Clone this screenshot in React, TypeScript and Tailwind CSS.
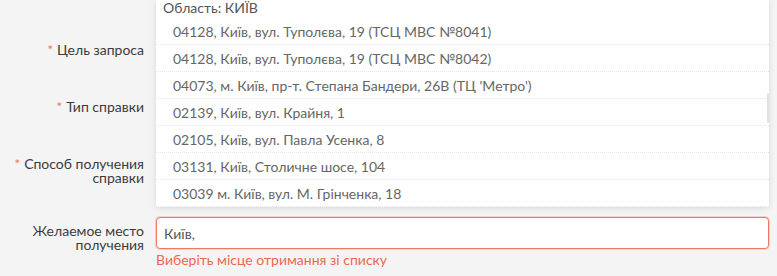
import { useState } from "react";

const addresses = [
  "04128, Київ, вул. Туполєва, 19 (ТСЦ МВС №8041)",
  "04128, Київ, вул. Туполєва, 19 (ТСЦ МВС №8042)",
  "04073, м. Київ, пр-т. Степана Бандери, 26В (ТЦ 'Метро')",
  "02139, Київ, вул. Крайня, 1",
  "02105, Київ, вул. Павла Усенка, 8",
  "03131, Київ, Столичне шосе, 104",
  "03039 м. Київ, вул. М. Грінченка, 18",
];

const Label = ({ required, children }: { required?: boolean; children: React.ReactNode }) => (
  <div className="w-[144px] shrink-0 text-right text-[14px] leading-[14px] text-[#3b3b3b]">
    {required && <span className="text-[#f07a5e] mr-1">*</span>}
    {children}
  </div>
);

const App = () => {
  const [value, setValue] = useState("Київ,");

  return (
    <div
      className="relative w-[777px] h-[276px] overflow-hidden bg-[#f4f4f4]"
      style={{ fontFamily: 'Lato, "Open Sans", sans-serif' }}
    >
      {/* FORM ROWS */}
      <div className="flex flex-col pr-[8px]">
        <div className="flex items-center gap-3 h-[28px] mt-[36px]">
          <Label required>Цель запроса</Label>
        </div>
        <div className="flex items-center gap-3 h-[28px] mt-[29px]">
          <Label required>Тип справки</Label>
        </div>
        <div className="flex items-center gap-3 h-[28px] mt-[36px]">
          <Label required>
            Способ получения
            <br />
            справки
          </Label>
        </div>
        <div className="flex items-start gap-3 mt-[32px]">
          <div className="pt-[7px]">
            <Label>
              Желаемое место
              <br />
              получения
            </Label>
          </div>
          <div className="flex-1">
            <input
              autoFocus
              value={value}
              onChange={(e) => setValue(e.target.value)}
              className="w-full h-[32px] rounded-[4px] border border-[#ef7a62] bg-white px-[7px] text-[14px] text-[#555] caret-[#333] outline-none shadow-[0_0_0_1px_rgba(239,122,98,0.3)]"
            />
            <div className="mt-[3px] text-[14px] leading-[16px] text-[#f0674c]">
              Виберіть місце отримання зі списку
            </div>
          </div>
        </div>
      </div>

      {/* DROPDOWN */}
      <div className="absolute left-[156px] right-[8px] top-0 h-[207px] bg-white shadow-[0_1px_6px_rgba(0,0,0,0.12)] overflow-hidden">
        <div className="h-[18px] pl-[7px] text-[14px] leading-[16px] text-[#555]">
          Область: КИЇВ
        </div>
        {addresses.map((a) => (
          <div
            key={a}
            className="h-[27px] pl-[17px] flex items-center border-b border-dotted border-[#e6e6e6] text-[14px] text-[#666] whitespace-nowrap"
          >
            {a}
          </div>
        ))}
        <div className="absolute right-0 top-[93px] h-[30px] w-[2px] bg-[#e2e2e2]" />
      </div>
    </div>
  );
};

export default App;
